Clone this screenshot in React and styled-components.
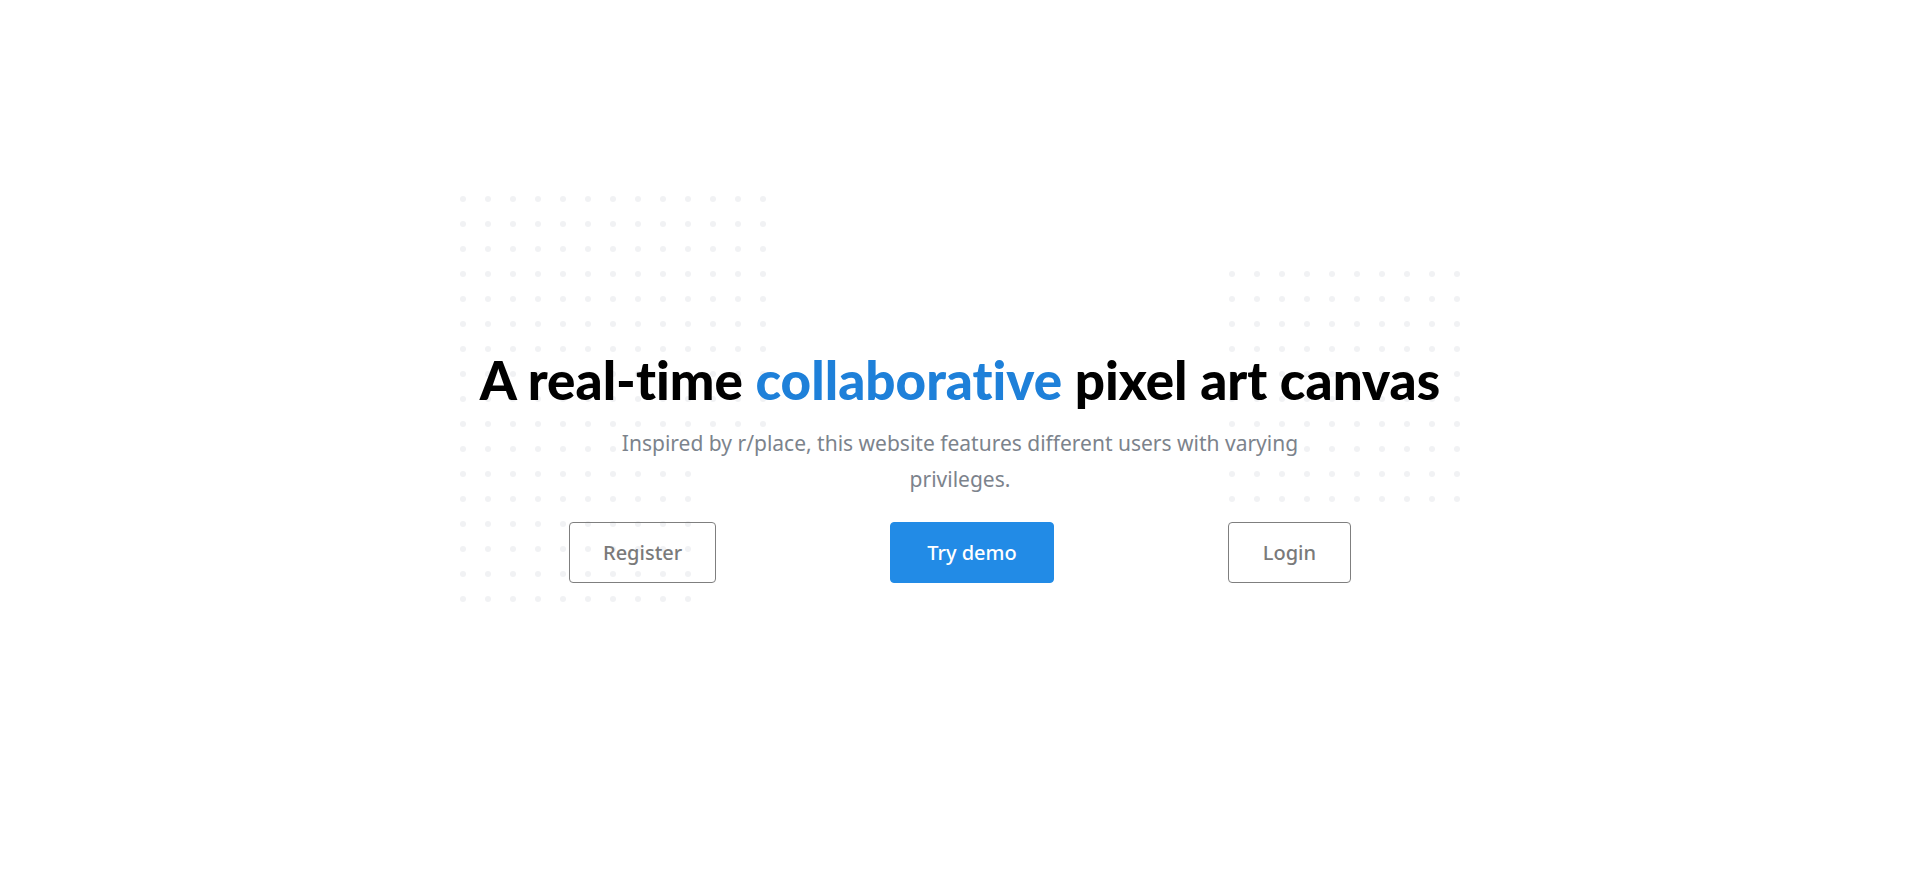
import React from "react";
import styled, { createGlobalStyle } from "styled-components";

const GlobalStyle = createGlobalStyle`
  html, body {
    margin: 0;
    padding: 0;
    background: #fff;
  }
  body {
    font-family: "Noto Sans", "Open Sans", Arial, sans-serif;
  }
`;

const Page = styled.main`
  min-height: 100vh;
  display: flex;
  justify-content: center;
  padding-top: 196px;
  box-sizing: border-box;
`;

const Hero = styled.section`
  position: relative;
  width: 1000px;
  height: 410px;
`;

const Dots = styled.svg`
  position: absolute;
  z-index: 0;
  left: ${({ side }) => (side === "left" ? "0" : "auto")};
  right: ${({ side }) => (side === "right" ? "0" : "auto")};
  top: ${({ top }) => top}px;
`;

const Content = styled.div`
  position: relative;
  z-index: 1;
  display: flex;
  flex-direction: column;
  align-items: center;
  padding-top: 154px;
`;

const Title = styled.h1`
  margin: 0;
  font-family: "Lato", "Open Sans", Arial, sans-serif;
  font-weight: 900;
  font-size: 53px;
  line-height: 60px;
  font-variant-ligatures: none;
  white-space: nowrap;
  color: #000;
  text-align: center;
  span {
    color: #1e80d9;
  }
`;

const Lead = styled.p`
  margin: 15px 0 0;
  max-width: 720px;
  text-align: center;
  font-size: 21px;
  line-height: 36px;
  color: #7c838c;
  span {
    background: #fff;
  }
`;

const Actions = styled.div`
  display: flex;
  align-items: center;
  gap: 174px;
  margin-top: 25px;
`;

const Button = styled.button`
  height: 61px;
  padding: 0 ${({ pad }) => pad}px;
  border-radius: 4px;
  font-family: "Noto Sans", "Open Sans", Arial, sans-serif;
  font-size: 20px;
  font-weight: 500;
  cursor: pointer;
  border: 1px solid ${({ primary }) => (primary ? "#228be6" : "#7f7f7f")};
  background: ${({ primary }) => (primary ? "#228be6" : "transparent")};
  color: ${({ primary }) => (primary ? "#fff" : "#7a7a7a")};
`;

const leftRows = [
  ...Array.from({ length: 11 }, () => 13),
  ...Array.from({ length: 6 }, () => 10),
];
const rightRows = Array.from({ length: 10 }, () => 10);

function DotGrid({ rows, side, top }) {
  const cols = Math.max(...rows);
  return (
    <Dots
      side={side}
      top={top}
      width={cols * 25 - 19}
      height={rows.length * 25 - 19}
      aria-hidden="true"
    >
      {rows.map((count, r) =>
        Array.from({ length: count }, (_, c) => (
          <circle
            key={`${r}-${c}`}
            cx={3 + c * 25}
            cy={3 + r * 25}
            r={3}
            fill="#f1f2f4"
          />
        ))
      )}
    </Dots>
  );
}

export default function App() {
  return (
    <>
      <GlobalStyle />
      <Page>
        <Hero>
          <DotGrid rows={leftRows} side="left" top={0} />
          <DotGrid rows={rightRows} side="right" top={75} />
          <Content>
            <Title>
              A real-time <span>collaborative</span> pixel art canvas
            </Title>
            <Lead>
              <span>
                Inspired by r/place, this website features different users
                with varying privileges.
              </span>
            </Lead>
            <Actions>
              <Button pad={33}>Register</Button>
              <Button primary pad={36}>
                Try demo
              </Button>
              <Button pad={34}>Login</Button>
            </Actions>
          </Content>
        </Hero>
      </Page>
    </>
  );
}
